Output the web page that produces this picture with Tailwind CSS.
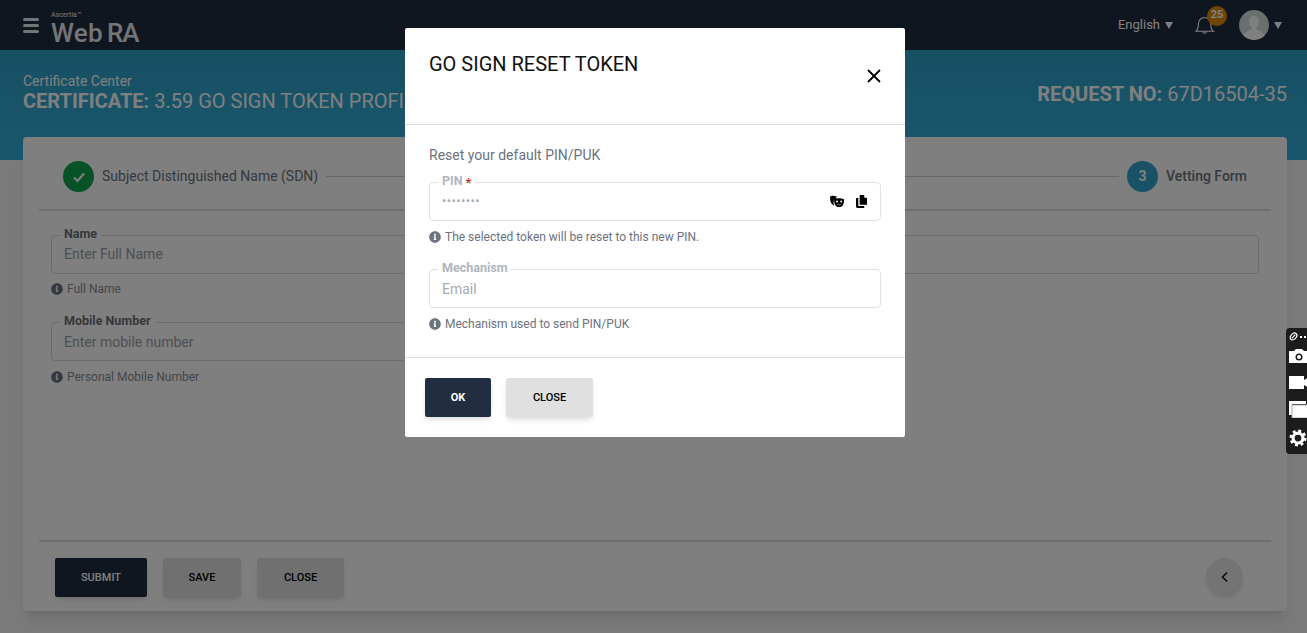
<!DOCTYPE html>
<html lang="en">
<head>
  <meta charset="UTF-8" />
  <meta name="viewport" content="width=device-width, initial-scale=1.0" />
  <title>WebRA</title>
  <script src="https://cdn.jsdelivr.net/npm/@tailwindcss/browser@4"></script>
</head>
<body class="relative h-[633px] overflow-hidden bg-[#f5f5f5] font-['Roboto',sans-serif]">

  <!-- Top bar -->
  <header class="h-[50px] bg-[#212d40] flex items-center text-white">
    <div class="ml-[23px] w-[16px] flex flex-col gap-[3px]">
      <span class="h-[3px] bg-white/90 rounded-sm"></span>
      <span class="h-[3px] bg-white/90 rounded-sm"></span>
      <span class="h-[3px] bg-white/90 rounded-sm"></span>
    </div>
    <div class="ml-[12px] self-start pt-[11px] flex flex-col">
      <span class="text-[7px] leading-[8px] text-white/90">Ascertia™</span>
      <span class="mt-[1px] text-[26px] leading-[26px] font-medium tracking-[0.3px] text-white/90">Web<span class="ml-[4px] tracking-[-1px]">RA</span></span>
    </div>
    <div class="ml-auto flex items-center">
      <span class="text-[13px]">English</span>
      <svg viewBox="0 0 8 7" class="ml-[5px] w-[8px] h-[7px]" fill="#fff"><path d="M0 0h8L4 7z"/></svg>
      <div class="relative ml-[22px] w-[20px] h-[24px]">
        <svg viewBox="0 0 24 24" class="w-[20px] h-[24px]" fill="none" stroke="#fff" stroke-width="1.300"><path d="M1 19.500h21c-2-1.500-3-3-3-8 0-5-3.500-8.500-7.500-8.500S4 6.500 4 11.500c0 5-1 6.500-3 8z"/><path d="M9 20a2.600 2.600 0 0 0 5 0"/></svg>
        <span class="absolute left-[12px] top-[-7px] w-[20px] h-[20px] rounded-full bg-[#de8a06] text-[11px] leading-[18px] font-bold text-center">25</span>
      </div>
      <div class="ml-[24px] w-[30px] h-[30px] rounded-full overflow-hidden">
        <svg viewBox="0 0 30 30" class="w-[30px] h-[30px]"><rect width="30" height="30" fill="#d2dcdc"/><path d="M15 6c-3.300 0-5 2.500-5 5.500 0 2.500 1 4.500 2.500 5.700v2C9 21 6 22 4.500 25v5h21v-5c-1.500-3-4.500-4-8-5.800v-2c1.500-1.200 2.500-3.200 2.500-5.700C20 8.500 18.300 6 15 6z" fill="#ffffff"/></svg>
      </div>
      <svg viewBox="0 0 8 7" class="ml-[5px] mr-[25px] w-[8px] h-[7px]" fill="#fff"><path d="M0 0h8L4 7z"/></svg>
    </div>
  </header>

  <!-- Title band -->
  <section class="h-[110px] bg-gradient-to-b from-[#2f9fc6] to-[#33aedb] flex justify-between pl-[23px] pr-[20px] text-white">
    <div class="pt-[23px]">
      <p class="text-[14px] leading-[16px]">Certificate Center</p>
      <p class="text-[20px] leading-[24px]"><b class="font-bold">CERTIFICATE:</b> 3.59 GO SIGN TOKEN PROFILE</p>
    </div>
    <p class="pt-[32px] text-[20px] leading-[24px]"><b class="font-bold">REQUEST NO:</b> 67D16504-35</p>
  </section>

  <!-- Form card -->
  <main class="relative ml-[23px] mr-[20px] mt-[-23px] h-[474px] bg-white rounded-[4px] shadow-lg flex flex-col">
    <div class="mx-[16px] h-[74px] border-b-2 border-[#dcdcdc] flex items-start pt-[24px] px-[24px]">
      <span class="w-[31px] h-[31px] rounded-full bg-[#0ea54c] flex items-center justify-center">
        <svg viewBox="0 0 16 16" class="w-[16px] h-[16px]" fill="none" stroke="#fff" stroke-width="2.200"><path d="M3 8.500l3.500 3.500L13 4.500"/></svg>
      </span>
      <span class="ml-[8px] mt-[7px] text-[14px] leading-[17px] text-[#6b7280]">Subject Distinguished Name (SDN)</span>
      <span class="flex-1 mx-[8px] mt-[15px] h-px bg-[#cfcfcf]"></span>
      <span class="w-[31px] h-[31px] rounded-full bg-[#33a5cf] text-white text-[14px] leading-[31px] font-bold text-center">3</span>
      <span class="ml-[8px] mt-[7px] text-[14px] leading-[17px] font-medium text-[#6b7280]">Vetting Form</span>
    </div>

    <div class="px-[28px] pt-[24px] flex-1">
      <div class="relative h-[39px] border border-[#d8d8d8] rounded-[4px] pl-[12px] text-[14px] leading-[37px] text-[#9aa0a8]">
        Enter Full Name
        <span class="absolute left-[8px] top-[-10px] bg-white px-[4px] text-[12.5px] leading-[15px] font-bold text-[#6e6e78]">Name</span>
      </div>
      <p class="mt-[7px] h-[16px] flex items-center gap-[4px] text-[12px] text-[#868e96]">
        <svg viewBox="0 0 512 512" class="w-[12px] h-[12px]" fill="#6b7280"><path d="M256 8C119.043 8 8 119.083 8 256c0 136.997 111.043 248 248 248s248-111.003 248-248C504 119.083 392.957 8 256 8zm0 110c23.196 0 42 18.804 42 42s-18.804 42-42 42-42-18.804-42-42 18.804-42 42-42zm56 254c0 6.627-5.373 12-12 12h-88c-6.627 0-12-5.373-12-12v-24c0-6.627 5.373-12 12-12h12v-64h-12c-6.627 0-12-5.373-12-12v-24c0-6.627 5.373-12 12-12h64c6.627 0 12 5.373 12 12v100h12c6.627 0 12 5.373 12 12v24z"/></svg>
        Full Name
      </p>
      <div class="relative mt-[25px] w-[550px] h-[39px] border border-[#d8d8d8] rounded-[4px] pl-[12px] text-[14px] leading-[38px] text-[#9aa0a8]">
        Enter mobile number
        <span class="absolute left-[8px] top-[-10px] bg-white px-[4px] text-[12.5px] leading-[15px] font-bold text-[#6e6e78]">Mobile Number</span>
      </div>
      <p class="mt-[8px] h-[16px] flex items-center gap-[4px] text-[12px] text-[#868e96]">
        <svg viewBox="0 0 512 512" class="w-[12px] h-[12px]" fill="#6b7280"><path d="M256 8C119.043 8 8 119.083 8 256c0 136.997 111.043 248 248 248s248-111.003 248-248C504 119.083 392.957 8 256 8zm0 110c23.196 0 42 18.804 42 42s-18.804 42-42 42-42-18.804-42-42 18.804-42 42-42zm56 254c0 6.627-5.373 12-12 12h-88c-6.627 0-12-5.373-12-12v-24c0-6.627 5.373-12 12-12h12v-64h-12c-6.627 0-12-5.373-12-12v-24c0-6.627 5.373-12 12-12h64c6.627 0 12 5.373 12 12v100h12c6.627 0 12 5.373 12 12v24z"/></svg>
        Personal Mobile Number
      </p>
    </div>

    <div class="mx-[16px] h-[71px] border-t-2 border-[#dcdcdc] pt-[16px] pl-[16px] pr-[28px] flex items-start text-[11px] font-medium">
      <button class="w-[92px] h-[39px] pt-[1px] rounded-[2px] bg-[#212d40] text-white shadow-md">SUBMIT</button>
      <button class="ml-[16px] w-[78px] h-[39px] pt-[1px] rounded-[2px] bg-[#e0e0e0] text-black shadow-md">SAVE</button>
      <button class="ml-[16px] w-[87px] h-[39px] pt-[1px] rounded-[2px] bg-[#e0e0e0] text-black shadow-md">CLOSE</button>
      <button class="ml-auto w-[37px] h-[37px] rounded-full bg-[#e8e8e8] shadow-md flex items-center justify-center">
        <svg viewBox="0 0 12 14" class="w-[10px] h-[12px]" fill="none" stroke="#111" stroke-width="1.800"><path d="M8.500 1.500L3 7l5.500 5.500"/></svg>
      </button>
    </div>
  </main>

  <!-- Modal backdrop -->
  <div class="absolute inset-0 bg-black/50"></div>

  <!-- Modal -->
  <div class="absolute left-[405px] top-[28px] w-[500px] h-[409px] bg-white rounded-[2px] flex flex-col">
    <div class="relative h-[97px] border-b border-[#dedede] px-[24px] pt-[24px]">
      <h2 class="text-[20px] leading-[24px] text-[#111]">GO SIGN RESET TOKEN</h2>
      <svg viewBox="0 0 14 14" class="absolute right-[24px] top-[41px] w-[14px] h-[14px]" fill="none" stroke="#000" stroke-width="1.800"><path d="M1 1l12 12M13 1L1 13"/></svg>
    </div>
    <div class="flex-1 px-[24px] pt-[22px]">
      <p class="text-[14px] leading-[17px] text-[#6b7280]">Reset your default PIN/PUK</p>
      <div class="relative mt-[18px] h-[39px] border border-[#dee2e6] rounded-[4px] pl-[12px] flex items-center justify-between">
        <span class="text-[13px] leading-[13px] mt-[-3px] tracking-[0.35px] text-[#a6acb4]">••••••••</span>
        <span class="absolute left-[8px] top-[-10px] bg-white px-[4px] text-[12.5px] leading-[15px] font-bold text-[#b0b5bd]">PIN<span class="relative top-[2px] ml-[3px] text-[13px] text-[#c0392b]">*</span></span>
        <span class="mr-[13px] flex items-center gap-[11px]">
          <svg viewBox="0 0 16 14" class="w-[16px] h-[13px]" fill="#000"><path d="M0.500 1.500C3 0.500 5 0.800 7.500 1.500L7 4.500c-1.500.3-2.500 1.500-2.700 3-.1 1.400.2 2.600.7 3.500C3 11 .3 8 0.500 1.500z"/><path d="M5 4.500c3-1.500 7.500-1.500 10.500 0 .3 4.500-1 8.500-5.200 8.500C6 13 4.700 9 5 4.500z"/><circle cx="8" cy="7" r="1" fill="#fff"/><circle cx="12.500" cy="7" r="1" fill="#fff"/><path d="M7.500 9.500c1.600 1.300 4 1.300 5.500 0-.5 2-4.800 2-5.500 0z" fill="#fff"/></svg>
          <svg viewBox="0 0 12 14" class="w-[11px] h-[13px]" fill="#000"><path d="M4 0h5v3h3v7.500H4z"/><path d="M2.500 3.200V12H9v2H1.500A1.500 1.500 0 0 1 0 12.500V3.200z"/></svg>
        </span>
      </div>
      <p class="mt-[8px] h-[16px] flex items-center gap-[4px] text-[12px] text-[#6b7280]">
        <svg viewBox="0 0 512 512" class="w-[12px] h-[12px]" fill="#6b7280"><path d="M256 8C119.043 8 8 119.083 8 256c0 136.997 111.043 248 248 248s248-111.003 248-248C504 119.083 392.957 8 256 8zm0 110c23.196 0 42 18.804 42 42s-18.804 42-42 42-42-18.804-42-42 18.804-42 42-42zm56 254c0 6.627-5.373 12-12 12h-88c-6.627 0-12-5.373-12-12v-24c0-6.627 5.373-12 12-12h12v-64h-12c-6.627 0-12-5.373-12-12v-24c0-6.627 5.373-12 12-12h64c6.627 0 12 5.373 12 12v100h12c6.627 0 12 5.373 12 12v24z"/></svg>
        The selected token will be reset to this new PIN.
      </p>
      <div class="relative mt-[24px] h-[39px] border border-[#dee2e6] rounded-[4px] pl-[12px] text-[14px] leading-[38px] text-[#a6acb4]">
        Email
        <span class="absolute left-[8px] top-[-10px] bg-white px-[4px] text-[12.5px] leading-[15px] font-bold text-[#b0b5bd]">Mechanism</span>
      </div>
      <p class="mt-[8px] h-[16px] flex items-center gap-[4px] text-[12px] text-[#6b7280]">
        <svg viewBox="0 0 512 512" class="w-[12px] h-[12px]" fill="#6b7280"><path d="M256 8C119.043 8 8 119.083 8 256c0 136.997 111.043 248 248 248s248-111.003 248-248C504 119.083 392.957 8 256 8zm0 110c23.196 0 42 18.804 42 42s-18.804 42-42 42-42-18.804-42-42 18.804-42 42-42zm56 254c0 6.627-5.373 12-12 12h-88c-6.627 0-12-5.373-12-12v-24c0-6.627 5.373-12 12-12h12v-64h-12c-6.627 0-12-5.373-12-12v-24c0-6.627 5.373-12 12-12h64c6.627 0 12 5.373 12 12v100h12c6.627 0 12 5.373 12 12v24z"/></svg>
        Mechanism used to send PIN/PUK
      </p>
    </div>
    <div class="h-[80px] border-t border-[#dedede] pl-[20px] pt-[20px] flex items-start text-[11px] font-medium">
      <button class="w-[66px] h-[39px] pt-[1px] rounded-[2px] bg-[#212d40] text-white font-bold shadow-md">OK</button>
      <button class="ml-[15px] w-[87px] h-[39px] pt-[1px] rounded-[2px] bg-[#e0e0e0] text-black shadow-md">CLOSE</button>
    </div>
  </div>

  <!-- Floating capture toolbar -->
  <div class="absolute right-0 top-[328px] w-[21px] h-[126px] bg-[#1c1c1c] rounded-l-[4px] overflow-hidden flex flex-col items-start pl-[3px] pt-[3px]">
    <div class="h-[11px] flex items-center gap-[2px]">
      <svg viewBox="0 0 10 10" class="w-[9px] h-[9px]" fill="none" stroke="#fff" stroke-width="1.300"><ellipse cx="5" cy="5" rx="4.300" ry="3" transform="rotate(-45 5 5)"/><path d="M3 7l4-4"/></svg>
      <span class="w-[2px] h-[2px] bg-white"></span><span class="w-[2px] h-[2px] bg-white"></span>
    </div>
    <svg viewBox="0 0 20 14" class="mt-[7px] w-[20px] h-[14px] shrink-0" fill="#fff"><path d="M0 2h5l2-2h6l2 2h5v12H0z"/><circle cx="10" cy="8" r="3.500" fill="#1c1c1c"/><circle cx="10" cy="8" r="2" fill="#fff"/></svg>
    <svg viewBox="0 0 20 13" class="mt-[13px] w-[20px] h-[13px] shrink-0" fill="#fff"><path d="M0 0h15v4l5-3v11l-5-3v4H0z"/></svg>
    <svg viewBox="0 0 20 17" class="mt-[12px] w-[20px] h-[17px] shrink-0"><path d="M0 0h17v3H3v11H0z" fill="#fff"/><rect x="3" y="4" width="17" height="13" fill="#fff" stroke="#aaa"/></svg>
    <svg viewBox="0 0 20 20" class="mt-[11px] w-[18px] h-[18px] shrink-0" fill="none" stroke="#fff"><circle cx="10" cy="10" r="5.500" stroke-width="3.500"/><circle cx="10" cy="10" r="8" stroke-width="3" stroke-dasharray="3.200 3.100"/></svg>
  </div>
</body>
</html>
